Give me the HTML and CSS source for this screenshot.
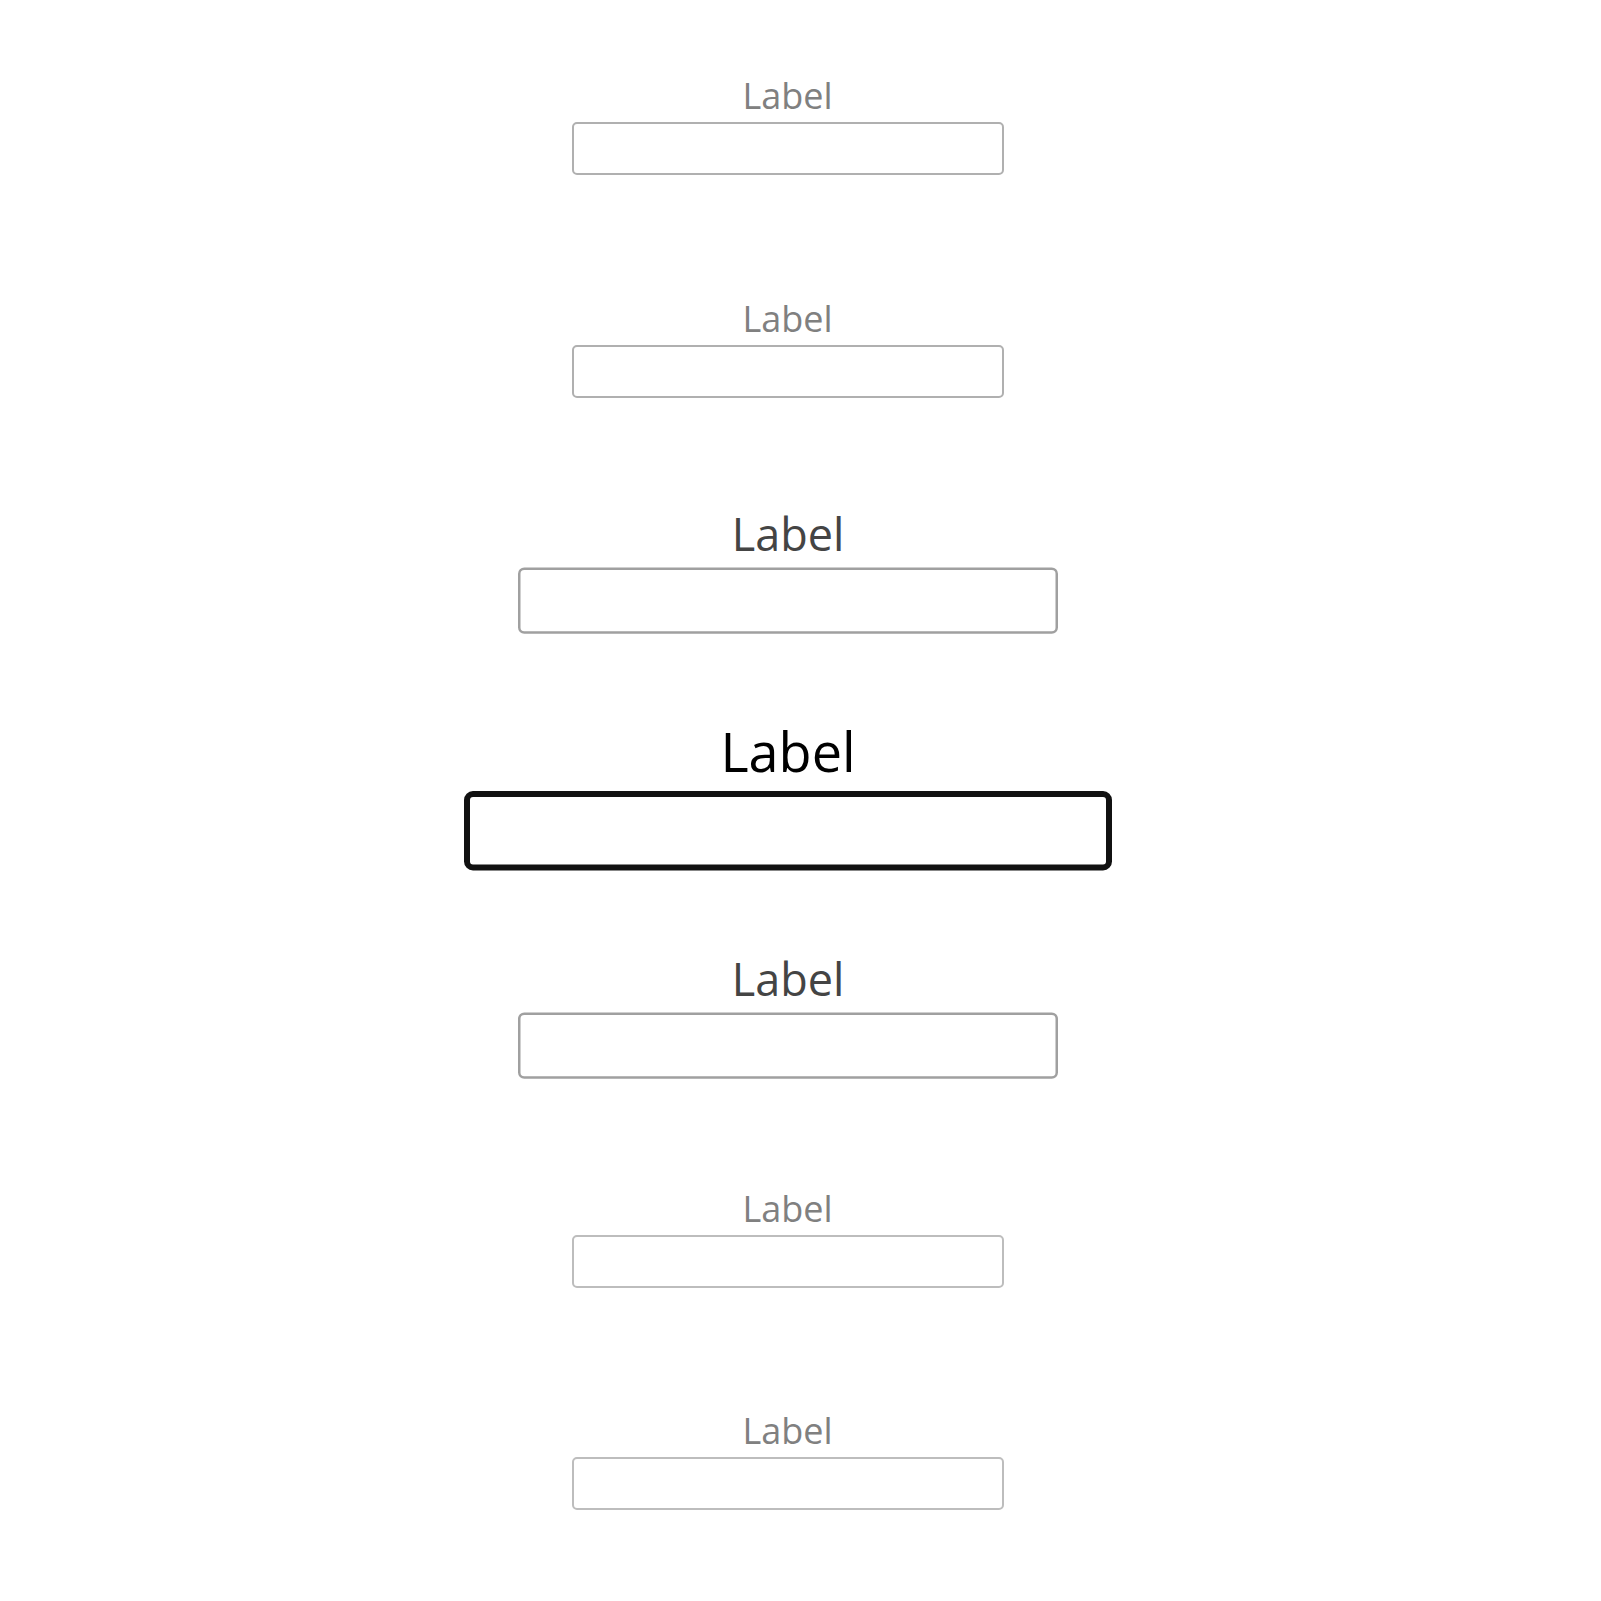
FILE: index.html
```html
<!DOCTYPE html>
<html lang="en">
<head>
<meta charset="utf-8">
<title>Labels</title>
<link rel="stylesheet" href="styles.css">
</head>
<body>
<div class="stack">
  <div class="field far"><label class="field-label">Label</label><div class="field-box"></div></div>
  <div class="field far"><label class="field-label">Label</label><div class="field-box"></div></div>
  <div class="field near"><label class="field-label">Label</label><div class="field-box"></div></div>
  <div class="field active"><label class="field-label">Label</label><div class="field-box"></div></div>
  <div class="field near"><label class="field-label">Label</label><div class="field-box"></div></div>
  <div class="field far light"><label class="field-label">Label</label><div class="field-box"></div></div>
  <div class="field far light"><label class="field-label">Label</label><div class="field-box"></div></div>
</div>
</body>
</html>
```
FILE: styles.css
```css
html, body {
  margin: 0;
  padding: 0;
  background: #ffffff;
}

body {
  font-family: "Open Sans", "Noto Sans", sans-serif;
}

.stack {
  display: flex;
  flex-direction: column;
  align-items: center;
  gap: 109.5px;
  padding: 62px 26px 0 0;
}

.field {
  width: 432px;
  height: 113px;
  display: flex;
  flex-direction: column;
  align-items: stretch;
  transform-origin: 50% 58px;
}

.field-label {
  display: block;
  text-align: center;
  font-size: 36px;
  line-height: 42px;
  padding-top: 13px;
  margin-bottom: 5px;
  color: #808080;
}

.field-box {
  box-sizing: border-box;
  height: 53px;
  border: 2px solid #b0b0b0;
  border-radius: 5px;
  background: #ffffff;
}

.field.light .field-box {
  border-color: #bdbdbd;
}

.field.near {
  transform: scale(1.25);
}

.field.near .field-label {
  color: #444444;
}

.field.near .field-box {
  border-color: #a0a0a0;
  border-width: 2px;
}

.field.active {
  transform: scale(1.5);
}

.field.active .field-label {
  color: #000000;
}

.field.active .field-box {
  border: 4px solid #111111;
  border-radius: 6px;
}
```
